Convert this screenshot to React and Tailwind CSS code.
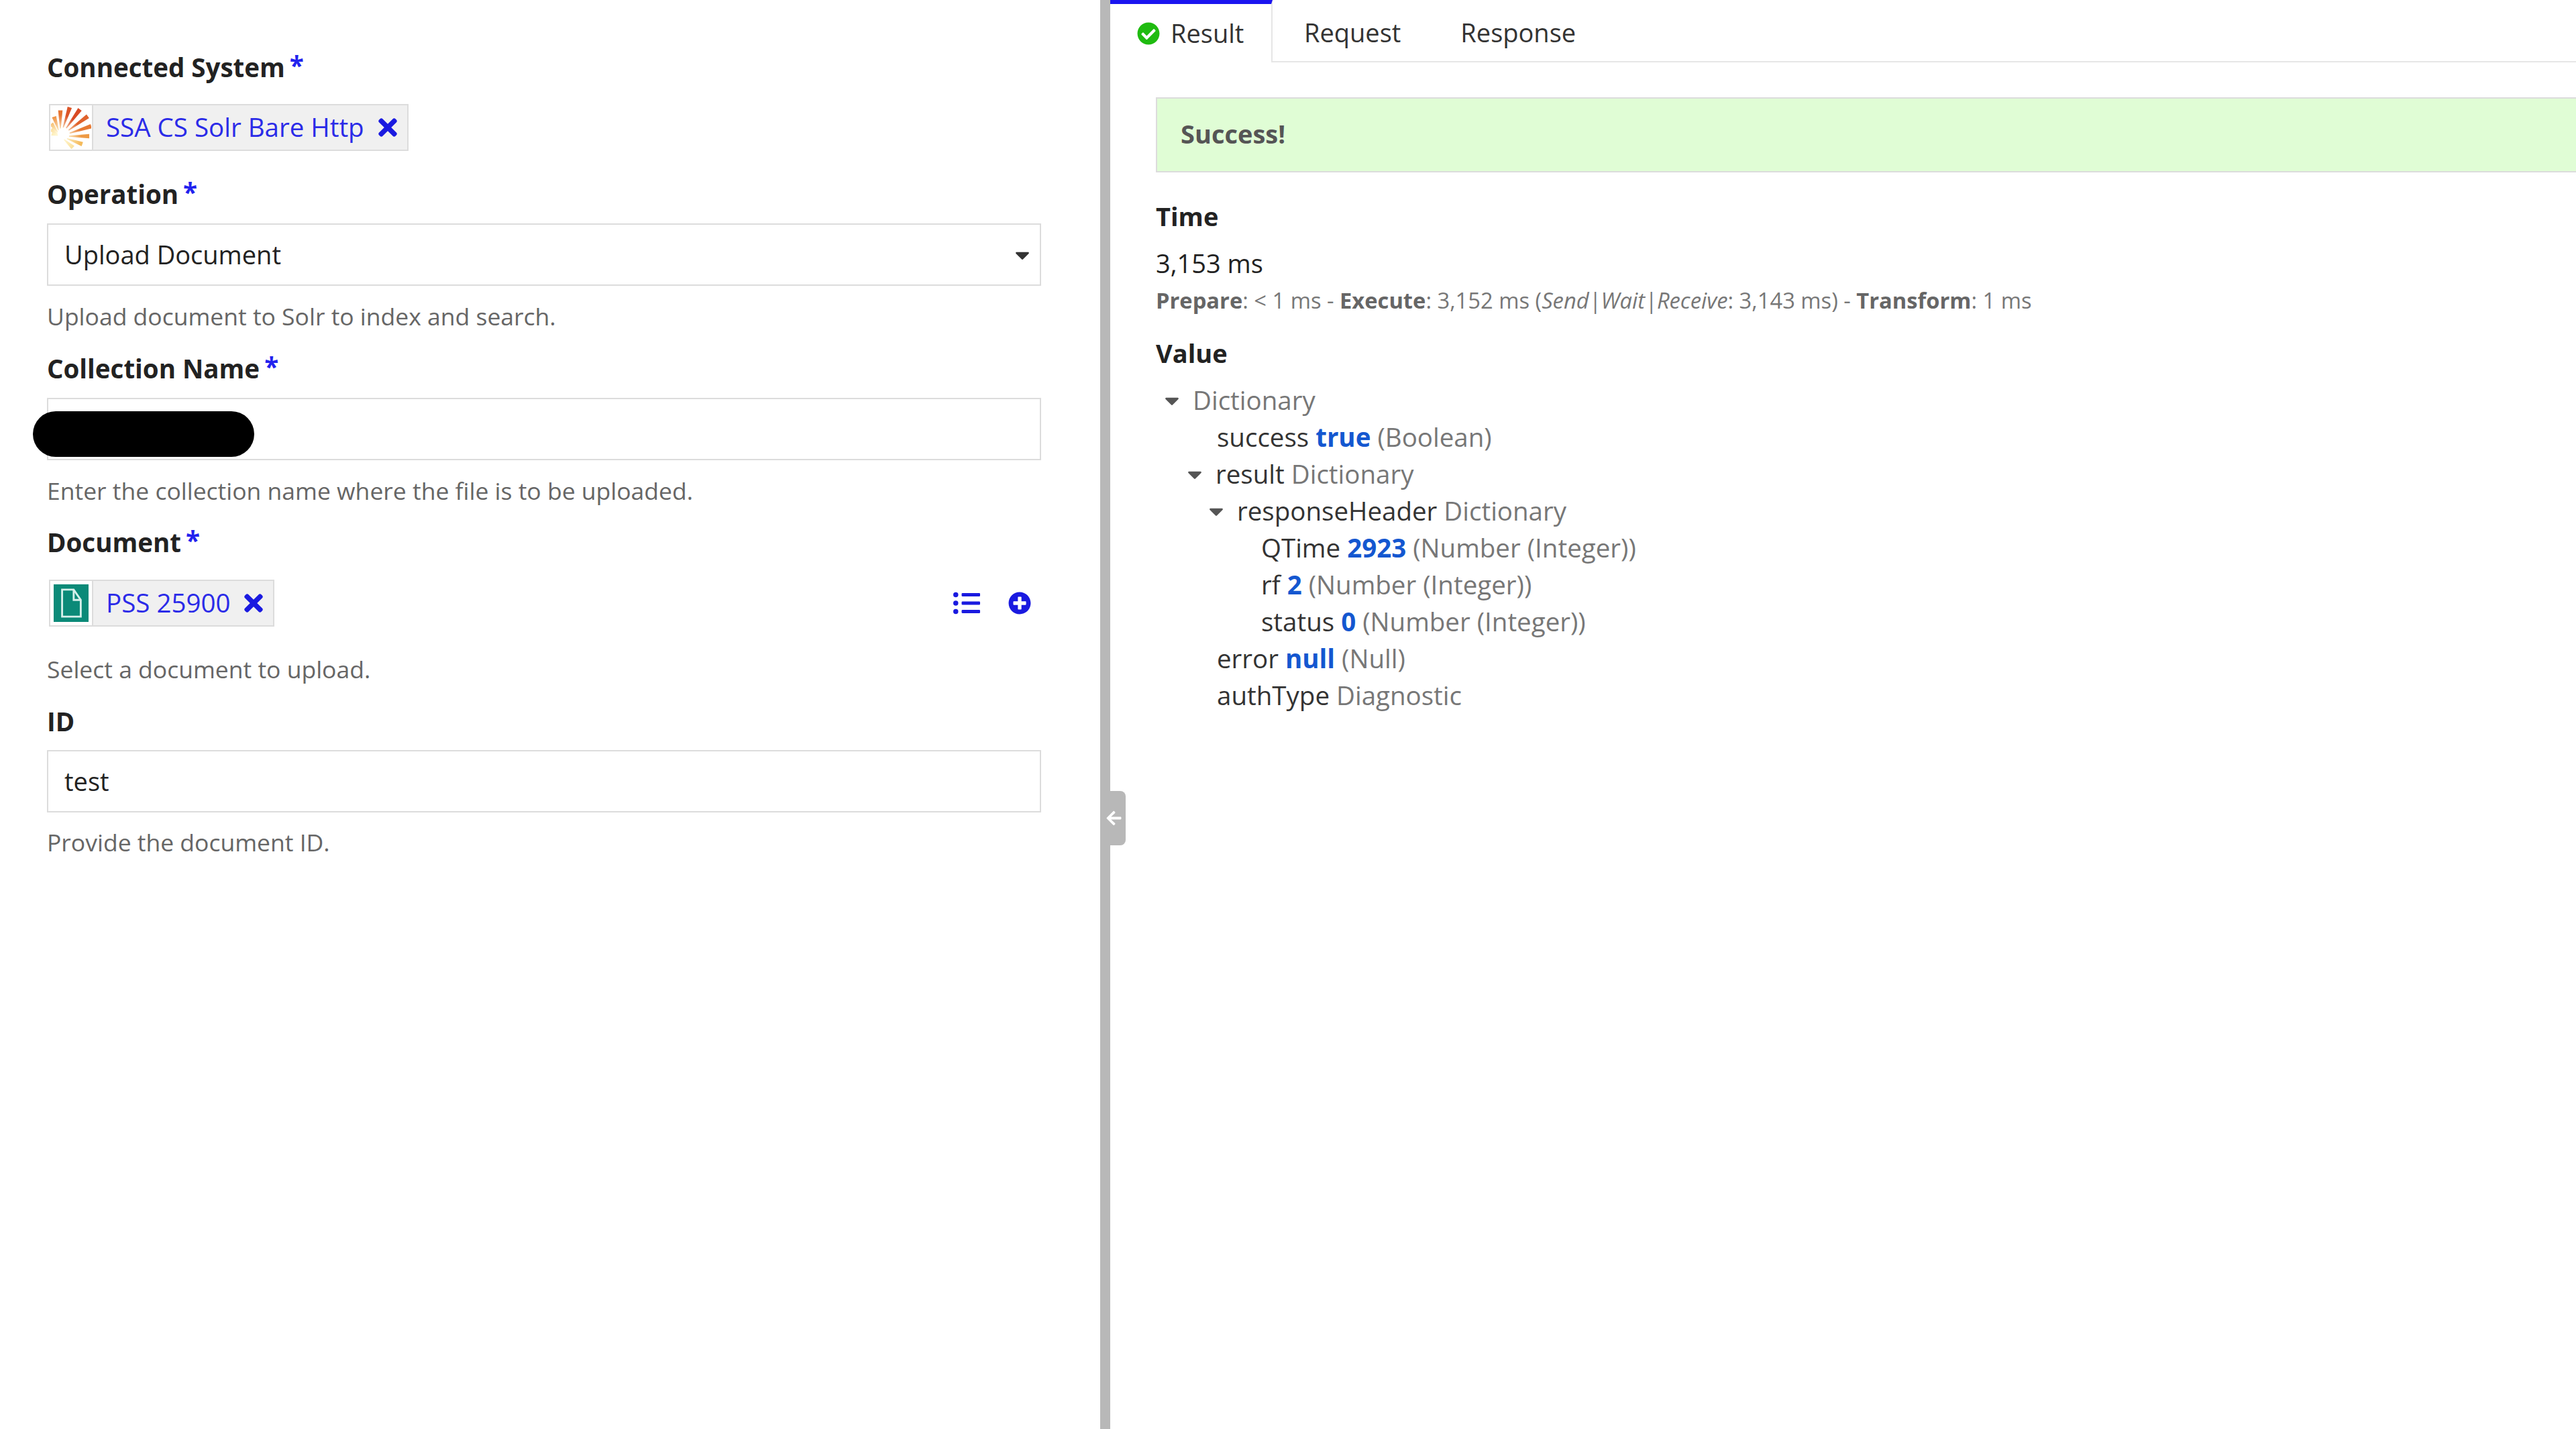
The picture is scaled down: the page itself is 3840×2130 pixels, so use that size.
import React from 'react';
import { FaTimes, FaListUl, FaPlusCircle, FaCheckCircle, FaCaretDown, FaArrowLeft } from 'react-icons/fa';

const Label = ({ children, required, className = '' }) => (
  <div className={`h-[52px] flex items-center font-bold text-[38.5px] text-[#222] leading-none ${className}`}>
    {children}
    {required && <span className="text-[#2222ee] ml-[7px] -mt-[6px]">*</span>}
  </div>
);

const Help = ({ children, className = '' }) => (
  <div className={`h-[44px] flex items-center text-[35.5px] text-[#666] ${className}`}>{children}</div>
);

// rays fan out from the lower left and stop on a circle, like the Solr logo
const SolrLogo = () => {
  const rays = [
    [-72, '#f9d77a'],
    [-54, '#f6bf5c'],
    [-36, '#f2a548'],
    [-18, '#ee8c3c'],
    [0, '#e77432'],
    [18, '#dc5528'],
    [36, '#d94a24'],
    [54, '#e0622c'],
    [72, '#e77a34'],
    [90, '#ee9a44'],
    [110, '#f5bb5c'],
    [132, '#f9d98a'],
  ];
  const cx = 14, cy = 45, Cx = 30, Cy = 32, R = 30;
  return (
    <svg viewBox="0 0 60 64" className="w-[60px] h-[64px]">
      <defs>
        {rays.map(([deg, color]) => {
          const a = (deg * Math.PI) / 180;
          const dx = Math.sin(a), dy = -Math.cos(a);
          return (
            <linearGradient key={deg} id={`ray${deg}`} gradientUnits="userSpaceOnUse" x1={cx} y1={cy} x2={cx + dx * 42} y2={cy + dy * 42}>
              <stop offset="0.15" stopColor="#fff6d0" />
              <stop offset="0.75" stopColor={color} />
            </linearGradient>
          );
        })}
      </defs>
      {rays.map(([deg]) => {
        const a = (deg * Math.PI) / 180;
        const dx = Math.sin(a), dy = -Math.cos(a);
        const ox = cx - Cx, oy = cy - Cy;
        const b = dx * ox + dy * oy;
        const t = -b + Math.sqrt(b * b - (ox * ox + oy * oy - R * R));
        const t0 = t * 0.3;
        const px = -dy, py = dx;
        const pts = [
          [cx + dx * t0 - px * 0.7, cy + dy * t0 - py * 0.7],
          [cx + dx * t0 + px * 0.7, cy + dy * t0 + py * 0.7],
          [cx + dx * t + px * 3.3, cy + dy * t + py * 3.3],
          [cx + dx * t - px * 3.3, cy + dy * t - py * 3.3],
        ];
        return <polygon key={deg} points={pts.map((p) => p.join(',')).join(' ')} fill={`url(#ray${deg})`} />;
      })}
    </svg>
  );
};

const DocIcon = () => (
  <div className="w-[52px] h-[56px] bg-[#0b8a78] flex items-center justify-center">
    <svg viewBox="0 0 36 48" className="w-[36px] h-[46px]" fill="none" stroke="#d6f0ea" strokeWidth="3">
      <path d="M4 3H22L33 19V45H4Z" />
      <path d="M22 3V19H33" />
    </svg>
  </div>
);

const Tag = ({ icon, text }) => (
  <div className="flex items-center h-[70px] ml-[3px] border-2 border-[#dcdcdc] bg-[#f0f0f0] text-[38.5px]">
    <div className="w-[64px] h-full bg-white border-r-2 border-[#dcdcdc] flex items-center justify-center">{icon}</div>
    <span className="ml-[19px] text-[#2b2be8]">{text}</span>
    <FaTimes className="ml-[15px] mr-[9px] text-[#1a1ae0] text-[40px]" />
  </div>
);

const Field = ({ children }) => (
  <div className="relative h-[93px] border-2 border-[#dcdcdc] flex items-center pl-[24px] text-[#222]">{children}</div>
);

const Row = ({ pl, open, children }) => (
  <div className="h-[55px] flex items-center whitespace-pre text-[38.5px] text-[#777]" style={{ paddingLeft: pl }}>
    {open && <FaCaretDown className="text-[#555] text-[34px] mr-[14px] -ml-[4px]" />}
    {children}
  </div>
);

const K = ({ children }) => <span className="text-[#333]">{children}</span>;
const V = ({ children }) => <span className="text-[#1457d0] font-bold">{children}</span>;
const B = ({ children }) => <b className="font-bold text-[#666]">{children}</b>;

export default function App() {
  return (
    <div className="w-[3840px] h-[2130px] flex bg-white font-['Open_Sans',sans-serif] text-[38px] overflow-hidden">
      {/* Form */}
      <div className="w-[1640px] shrink-0 pl-[70px] pr-[88px] pt-[74px]">
        <Label required>Connected System</Label>
        <div className="mt-[29px] flex"><Tag icon={<SolrLogo />} text="SSA CS Solr Bare Http" /></div>

        <Label required className="mt-[38px]">Operation</Label>
        <div className="mt-[18px]">
          <Field>
            Upload Document
            <FaCaretDown className="absolute right-[9px] top-[28px] text-[34px] text-[#333]" />
          </Field>
        </div>
        <Help className="mt-[24px]">Upload document to Solr to index and search.</Help>

        <Label required className="mt-[29px]">Collection Name</Label>
        <div className="mt-[18px] relative">
          <Field />
          <div className="absolute left-[-21px] top-[20px] w-[330px] h-[68px] rounded-full bg-black" />
        </div>
        <Help className="mt-[24px]">Enter the collection name where the file is to be uploaded.</Help>

        <Label required className="mt-[28px]">Document</Label>
        <div className="mt-[30px] flex items-center">
          <Tag icon={<DocIcon />} text="PSS 25900" />
          <div className="ml-auto flex items-center">
            <FaListUl className="text-[#1a1ae0] text-[40px] mr-[42px]" />
            <FaPlusCircle className="text-[#1a1ae0] text-[34px] mr-[15px]" />
          </div>
        </div>
        <Help className="mt-[42px]">Select a document to upload.</Help>

        <Label className="mt-[29px]">ID</Label>
        <div className="mt-[17px]"><Field>test</Field></div>
        <Help className="mt-[23px]">Provide the document ID.</Help>
      </div>

      {/* Divider */}
      <div className="relative w-[15px] shrink-0 bg-[#b8b8b8]">
        <div className="absolute left-0 top-[1179px] w-[38px] h-[81px] pl-[3px] bg-[#b8b8b8] rounded-r-[8px] flex items-center justify-center">
          <FaArrowLeft className="text-white text-[25px]" />
        </div>
      </div>

      {/* Result */}
      <div className="flex-1 min-w-0">
        <div className="flex h-[93px]">
          <div className="w-[242px] border-t-[6px] border-[#1a14f0] border-r-2 border-r-[#e6e6e6] flex items-center pl-[40px] text-[#333]">
            <FaCheckCircle className="text-[#1fbb10] text-[34px] mr-[16px]" />
            Result
          </div>
          <div className="flex-1 border-b-2 border-[#e6e6e6] flex items-center pl-[47px] pt-[6px] text-[#333]">
            <span>Request</span>
            <span className="ml-[89px]">Response</span>
          </div>
        </div>
        <div className="pl-[68px]">
          <div className="mt-[52px] h-[112px] bg-[#e0fdd5] border-2 border-r-0 border-[#dcdcdc] flex items-center pl-[35px] pb-[4px] font-bold text-[#555]">
            Success!
          </div>
          <div className="mt-[42px] font-bold text-[#222] leading-none h-[46px] flex items-center">Time</div>
          <div className="mt-[24px] h-[46px] flex items-center text-[#222]">3,153 ms</div>
          <div className="mt-[10px] h-[46px] flex items-center text-[32.7px] text-[#777] whitespace-pre">
            <B>Prepare</B>: &lt; 1 ms - <B>Execute</B>: 3,152 ms (<i>Send|Wait|Receive</i>: 3,143 ms) - <B>Transform</B>: 1 ms
          </div>
          <div className="mt-[32px] font-bold text-[#222] leading-none h-[46px] flex items-center">Value</div>
          <div className="mt-[20px]">
            <Row pl={11} open>Dictionary</Row>
            <Row pl={91}><K>success </K><V>true</V> (Boolean)</Row>
            <Row pl={45} open><K>result </K>Dictionary</Row>
            <Row pl={77} open><K>responseHeader </K>Dictionary</Row>
            <Row pl={157}><K>QTime </K><V>2923</V> (Number (Integer))</Row>
            <Row pl={157}><K>rf </K><V>2</V> (Number (Integer))</Row>
            <Row pl={157}><K>status </K><V>0</V> (Number (Integer))</Row>
            <Row pl={91}><K>error </K><V>null</V> (Null)</Row>
            <Row pl={91}><K>authType </K>Diagnostic</Row>
          </div>
        </div>
      </div>
    </div>
  );
}
